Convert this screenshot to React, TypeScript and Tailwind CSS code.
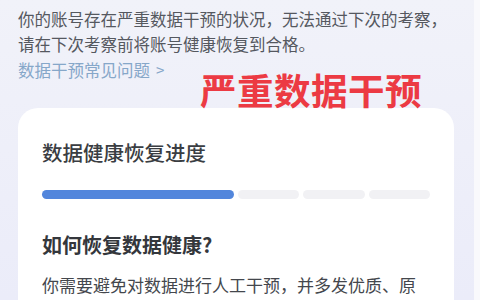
import React from 'react';

const FONT = { fontFamily: '"Noto Sans CJK SC", "Noto Sans", sans-serif' };

export default function App() {
  return (
    <div className="flex h-[300px] w-[480px] overflow-hidden bg-[#f7f7fc]" style={FONT}>
      <div className="relative h-full w-[474px] bg-gradient-to-b from-[#f1f2f9] to-[#ebecf9] pl-[18px] pr-[20px] pt-[7px]">
        {/* Intro */}
        <p className="text-[16.5px] leading-[24.5px] text-[#55585f]">
          你的账号存在严重数据干预的状况，无法通过下次的考察，
          <br />
          请在下次考察前将账号健康恢复到合格。
        </p>
        <div className="mt-[2px] flex items-center gap-[6px] text-[16.5px] leading-[24px] text-[#86a7c9]">
          数据干预常见问题
          <span className="text-[15px]">&gt;</span>
        </div>

        {/* Overlay caption */}
        <div className="absolute left-[200px] top-[71px] text-[36.5px] font-bold leading-[38px] tracking-[0.5px] text-[#ec3a43]">
          严重数据干预
        </div>

        {/* Card */}
        <div className="mt-[26px] h-[220px] w-[436px] overflow-hidden rounded-[20px] bg-white px-[24px] pt-[30px]">
          <h2 className="text-[20.5px] font-medium leading-[28px] text-[#3a3d42]">数据健康恢复进度</h2>

          <div className="mt-[24px] flex h-[9px] w-[388px] gap-[4px]">
            <div className="h-full w-[192px] rounded-full bg-[#5286dc]" />
            <div className="h-full flex-1 rounded-full bg-[#f1f1f4]" />
            <div className="h-full flex-1 rounded-full bg-[#f1f1f4]" />
            <div className="h-full flex-1 rounded-full bg-[#f1f1f4]" />
          </div>

          <h3 className="mt-[32px] text-[20px] font-bold leading-[28px] text-[#34373c]">如何恢复数据健康?</h3>
          <p className="mt-[13px] w-[388px] text-[17px] leading-[26px] text-[#44474d]">
            你需要避免对数据进行人工干预，并多发优质、原创内容，保持账号健康。
          </p>
        </div>
      </div>
      <div className="h-full flex-1 bg-[#f9f9fc]" />
    </div>
  );
}
